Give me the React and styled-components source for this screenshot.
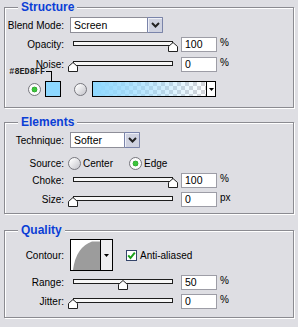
import styled, { createGlobalStyle } from 'styled-components'

const GlobalStyle = createGlobalStyle`
  html, body {
    margin: 0;
    padding: 0;
    background: #dedee3;
  }
  body {
    font-family: "Liberation Sans", Arial, sans-serif;
    font-size: 10px;
    color: #000;
  }
`

const Page = styled.div`
  width: 298px;
  height: 327px;
  box-sizing: border-box;
  padding: 0 4px 0 4px;
  overflow: hidden;
  background: #dedee3;
`

const Group = styled.fieldset`
  margin: ${(p) => p.$top}px 0 0;
  padding: 0 0 ${(p) => p.$pb}px;
  border: 1px solid #8b8b91;
  box-shadow: inset 1px 1px 0 #fff, 1px 1px 0 #fff;
  min-width: 0;
  display: flex;
  flex-direction: column;
`

const Legend = styled.legend`
  margin-left: 13px;
  padding: 0 3px;
  font: bold 12px/14px "Liberation Sans", Arial, sans-serif;
  color: #0b3ed6;
  background: #dedee3;
`

const Row = styled.div`
  display: flex;
  align-items: center;
  height: ${(p) => p.$h || 15}px;
  margin-top: ${(p) => p.$mt || 0}px;
`

const Label = styled.div`
  width: 59px;
  flex: none;
  text-align: right;
  margin-right: ${(p) => p.$gap ?? 6}px;
  line-height: 11px;
`

const SelectBox = styled.div`
  display: flex;
  width: ${(p) => p.$w}px;
  height: 16px;
  box-sizing: border-box;
  background: #fff;
  border: 1px solid #8e8e98;
`

const SelectText = styled.div`
  flex: 1;
  padding-left: 3px;
  line-height: 14px;
  font-size: 10.5px;
`

const SelectButton = styled.div`
  width: 16px;
  margin: -1px -1px -1px 0;
  box-sizing: border-box;
  border: 1px solid #7a84aa;
  border-radius: 1px;
  background: #cfd2e0;
  box-shadow: inset 1px 1px 0 #eef0f8;
  display: flex;
  align-items: center;
  justify-content: center;
`

const Select = ({ w, value }) => (
  <SelectBox $w={w}>
    <SelectText>{value}</SelectText>
    <SelectButton>
      <svg width="9" height="6" viewBox="0 0 9 6">
        <path d="M1 1 L4.5 4.5 L8 1" fill="none" stroke="#222" strokeWidth="2" />
      </svg>
    </SelectButton>
  </SelectBox>
)

const SliderBox = styled.div`
  position: relative;
  width: 100px;
  height: 15px;
  margin: 0 8px 0 3px;
  flex: none;
`

const Track = styled.div`
  margin-top: 4px;
  height: 5px;
  box-sizing: border-box;
  border: 1px solid #1e1e1e;
  background: #f7f7f7;
`

const Thumb = styled.svg`
  position: absolute;
  top: 5px;
`

const Slider = ({ value }) => (
  <SliderBox>
    <Track />
    <Thumb width="10" height="10" viewBox="0 0 10 10" style={{ left: `calc(${value}% - 5px)` }}>
      <path d="M5 0.5 L9.5 4.5 V9.5 H0.5 V4.5 Z" fill="#fff" stroke="#222" />
    </Thumb>
  </SliderBox>
)

const Input = styled.div`
  width: 36px;
  height: 15px;
  box-sizing: border-box;
  flex: none;
  background: #fff;
  border: 1px solid #9d9da6;
  padding-left: 3px;
  line-height: 13px;
  font-size: 10.5px;
`

const Unit = styled.div`
  margin-left: 3px;
  align-self: flex-start;
  line-height: 12px;
  font-size: 10px;
`

const SliderRow = ({ label, value, unit = '%', mt }) => (
  <Row $mt={mt}>
    <Label>{label}</Label>
    <Slider value={value} />
    <Input>{value}</Input>
    <Unit>{unit}</Unit>
  </Row>
)

const RadioDot = styled.span`
  width: 13px;
  height: 13px;
  box-sizing: border-box;
  flex: none;
  border-radius: 50%;
  border: 1px solid #77777e;
  background: ${(p) =>
    p.$on
      ? 'radial-gradient(circle at 50% 50%, #3cc43c 0 2px, #1f8f1f 2.6px, #fff 3.2px, #f2f2f4 100%)'
      : 'linear-gradient(135deg, #ffffff 10%, #c9c9cf 90%)'};
  margin-left: ${(p) => p.$ml || 0}px;
`

const RadioText = styled.span`
  margin-left: 2px;
`

const Swatch = styled.div`
  position: relative;
  width: 16px;
  height: 16px;
  box-sizing: border-box;
  margin-left: 4px;
  border: 1px solid #000;
  background: #8ed8ff;
`

const HexTip = styled.div`
  position: absolute;
  right: 8px;
  bottom: 15px;
  display: flex;
  align-items: flex-start;
`

const HexText = styled.span`
  font: bold 8.5px/7px "Liberation Mono", monospace;
  color: #222;
  margin-top: -2px;
  margin-right: 1px;
`

const Bracket = styled.span`
  width: 5px;
  height: 9px;
  border-top: 1px solid #000;
  border-right: 1px solid #000;
`

const GradientBox = styled.div`
  display: flex;
  height: 16px;
  margin-left: 5px;
  box-sizing: border-box;
  border: 1px solid #000;
`

const GradientFill = styled.div`
  width: 113px;
  background:
    linear-gradient(to right, #8ed8ff 0%, rgba(142, 216, 255, 0.6) 45%, rgba(142, 216, 255, 0) 100%),
    repeating-conic-gradient(#d4d4d8 0 25%, #ffffff 0 50%) 0 0 / 8px 8px;
`

const ArrowPart = styled.div`
  width: 8px;
  border-left: 1px solid #000;
  background: #fff;
  display: flex;
  align-items: center;
  justify-content: center;
`

const ContourBox = styled.div`
  display: flex;
  width: 43px;
  height: 32px;
  box-sizing: border-box;
  border: 1px solid #000;
  background: #fff;
`

const ContourArrow = styled.div`
  flex: 1;
  border-left: 1px solid #000;
  background: #eeeef0;
  display: flex;
  align-items: center;
  justify-content: center;
`

const Check = styled.span`
  width: 11px;
  height: 11px;
  box-sizing: border-box;
  margin-left: 13px;
  border: 1px solid #34446a;
  background: #fff;
  display: flex;
  align-items: center;
  justify-content: center;
`

const CheckText = styled.span`
  margin-left: 3px;
`

const DownArrow = () => (
  <svg width="5" height="3" viewBox="0 0 5 3">
    <path d="M0 0 H5 L2.5 3 Z" fill="#000" />
  </svg>
)

const App = () => (
  <Page>
    <GlobalStyle />
    <Group $top={0} $pb={10}>
      <Legend>Structure</Legend>
      <Row $h={16} $mt={3}>
        <Label>Blend Mode:</Label>
        <Select w={93} value="Screen" />
      </Row>
      <SliderRow label="Opacity:" value={100} mt={4} />
      <SliderRow label="Noise:" value={0} mt={5} />
      <Row $h={16} $mt={9}>
        <RadioDot $on $ml={23} />
        <Swatch>
          <HexTip>
            <HexText>#8ED8FF</HexText>
            <Bracket />
          </HexTip>
        </Swatch>
        <RadioDot $ml={13} />
        <GradientBox>
          <GradientFill />
          <ArrowPart>
            <DownArrow />
          </ArrowPart>
        </GradientBox>
      </Row>
    </Group>

    <Group $top={7} $pb={6}>
      <Legend>Elements</Legend>
      <Row $h={16} $mt={3}>
        <Label>Technique:</Label>
        <Select w={70} value="Softer" />
      </Row>
      <Row $h={16} $mt={7}>
        <Label $gap={4}>Source:</Label>
        <RadioDot />
        <RadioText>Center</RadioText>
        <RadioDot $on $ml={16} />
        <RadioText>Edge</RadioText>
      </Row>
      <SliderRow label="Choke:" value={100} mt={2} />
      <SliderRow label="Size:" value={0} unit="px" mt={4} />
    </Group>

    <Group $top={9} $pb={8}>
      <Legend>Quality</Legend>
      <Row $h={32} $mt={2}>
        <Label>Contour:</Label>
        <ContourBox>
          <svg width="29" height="30" viewBox="0 0 29 30">
            <path d="M2 30 Q5 7 21 1.5 L29 1.5 L29 30 Z" fill="#9c9c9c" />
          </svg>
          <ContourArrow>
            <DownArrow />
          </ContourArrow>
        </ContourBox>
        <Check>
          <svg width="9" height="9" viewBox="0 0 9 9">
            <path d="M1.2 4.4 L3.5 7 L7.8 1.6" fill="none" stroke="#19a019" strokeWidth="2" />
          </svg>
        </Check>
        <CheckText>Anti-aliased</CheckText>
      </Row>
      <SliderRow label="Range:" value={50} mt={4} />
      <SliderRow label="Jitter:" value={0} mt={4} />
    </Group>
  </Page>
)

export default App
